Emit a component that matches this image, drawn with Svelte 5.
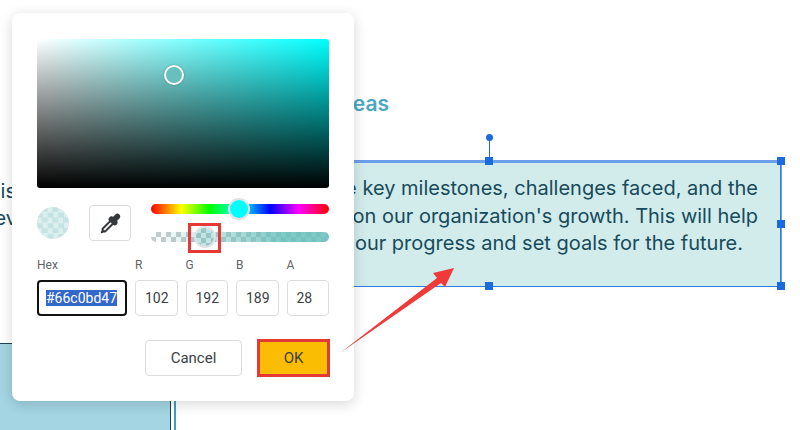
<script>
	let channels = [
		{ label: "R", value: 102 },
		{ label: "G", value: 192 },
		{ label: "B", value: 189 },
		{ label: "A", value: 28 }
	];
</script>

<div class="page">
	<!-- slide underneath the dialog -->
	<div class="side-text line-a">this</div>
	<div class="side-text line-b">rev</div>
	<div class="title">Key Ideas</div>
	<div class="side-box"></div>
	<div class="side-line"></div>

	<div class="text-box">
		<div class="line">Outline the key milestones, challenges faced, and the</div>
		<div class="line">impact on our organization's growth. This will help</div>
		<div class="line last">us track our progress and set goals for the future.</div>
		<span class="handle tm"></span>
		<span class="handle tr"></span>
		<span class="handle mr"></span>
		<span class="handle bm"></span>
		<span class="handle br"></span>
		<span class="stem"></span>
		<span class="rotate"></span>
	</div>

	<!-- colour picker -->
	<div class="dialog">
		<div class="sv">
			<span class="sv-thumb"></span>
		</div>

		<div class="controls">
			<div class="swatch"></div>
			<button class="dropper" aria-label="Pick colour">
				<svg width="21" height="21" viewBox="0 0 24 24" fill="none" stroke="#35383b" stroke-width="2.3" stroke-linecap="round" stroke-linejoin="round">
					<path d="m2 22 1-1h3l9-9" />
					<path d="M3 21v-3l9-9" />
					<path d="m15 6 3.4-3.4a2.1 2.1 0 1 1 3 3L18 9l.4.4a2.1 2.1 0 1 1-3 3l-3.8-3.8a2.1 2.1 0 1 1 3-3l.4.4Z" fill="#35383b" />
				</svg>
			</button>
			<div class="sliders">
				<div class="hue">
					<span class="hue-thumb"></span>
				</div>
				<div class="alpha">
					<span class="alpha-thumb"></span>
					<span class="alpha-mark"></span>
				</div>
			</div>
		</div>

		<div class="fields">
			<div class="label">Hex</div>
			{#each channels as c}
				<div class="label">{c.label}</div>
			{/each}
			<div class="field hex"><span class="selected">#66c0bd47</span></div>
			{#each channels as c}
				<div class="field">{c.value}</div>
			{/each}
		</div>

		<div class="actions">
			<button class="cancel">Cancel</button>
			<button class="ok">OK</button>
		</div>
	</div>

	<svg class="arrow" width="800" height="430" viewBox="0 0 800 430">
		<path d="M340 353 L437 278 L433 273 L454 268 L445 287 L441 283 Z" fill="#f03a3a" />
	</svg>
</div>

<style>
	:global(body) {
		margin: 0;
		background: #fff;
	}

	.page {
		position: relative;
		width: 800px;
		height: 430px;
		overflow: hidden;
		background: #fff;
		font-family: Roboto, "Liberation Sans", sans-serif;
	}

	.side-text {
		position: absolute;
		font-family: Inter, "Liberation Sans", sans-serif;
		font-size: 20px;
		line-height: 26px;
		color: #174a5b;
		white-space: nowrap;
	}

	.line-a {
		right: 784px;
		top: 178px;
	}

	.line-b {
		right: 783px;
		top: 205px;
	}

	.title {
		position: absolute;
		right: 411px;
		top: 90px;
		font-family: Inter, "Liberation Sans", sans-serif;
		font-size: 21px;
		line-height: 28px;
		font-weight: 600;
		color: #4aa8c0;
		white-space: nowrap;
	}

	.side-box {
		position: absolute;
		left: -2px;
		top: 343px;
		width: 172px;
		height: 100px;
		background: #a3d5e3;
		border-top: 1px solid #23414d;
		border-right: 1px solid #23414d;
	}

	.side-line {
		position: absolute;
		left: 174px;
		top: 343px;
		width: 2px;
		height: 87px;
		background: #3f9fbb;
	}

	.text-box {
		position: absolute;
		left: 197px;
		top: 161px;
		width: 584px;
		height: 126px;
		background: #d2ecec;
		box-sizing: border-box;
		padding: 12px 22px 0 0;
		border-top: 2px solid #6a9fec;
		border-right: 1px solid #2f7ae6;
		border-bottom: 1px solid #2f7ae6;
		box-shadow: 0 -1px 0 0 #6a9fec, 1px 0 0 0 #6a9fec;
		font-family: Inter, "Liberation Sans", sans-serif;
		font-size: 20px;
		line-height: 27.5px;
		color: #174a5b;
	}

	.line {
		text-align: right;
		white-space: nowrap;
	}

	.line.last {
		padding-right: 15px;
	}

	.handle {
		position: absolute;
		width: 8px;
		height: 8px;
		background: #1a6be0;
		margin: -4px 0 0 -4px;
	}

	.tm {
		left: 292px;
		top: -2px;
	}

	.tr {
		left: 584px;
		top: -2px;
	}

	.mr {
		left: 584px;
		top: 61px;
	}

	.bm {
		left: 292px;
		top: 123px;
	}

	.br {
		left: 584px;
		top: 123px;
	}

	.stem {
		position: absolute;
		left: 292px;
		top: -26px;
		width: 1px;
		height: 24px;
		background: #1a6be0;
	}

	.rotate {
		position: absolute;
		left: 289px;
		top: -29px;
		width: 7px;
		height: 7px;
		border-radius: 50%;
		background: #1a6be0;
	}

	.arrow {
		position: absolute;
		left: 0;
		top: 0;
	}

	.dialog {
		position: absolute;
		left: 12px;
		top: 13px;
		width: 342px;
		box-sizing: border-box;
		padding: 26px 25px 24px;
		background: #fff;
		border-radius: 8px;
		box-shadow: 0 3px 14px rgba(0, 0, 0, 0.16);
	}

	.sv {
		position: relative;
		height: 149px;
		border-radius: 3px;
		background:
			linear-gradient(to top, #000, transparent),
			linear-gradient(to right, #fff, #0ff);
	}

	.sv-thumb {
		position: absolute;
		left: 127px;
		top: 26px;
		width: 20px;
		height: 20px;
		box-sizing: border-box;
		border: 2px solid #fff;
		border-radius: 50%;
		background: #66c0bd;
		box-shadow: 0 0 2px rgba(0, 0, 0, 0.35);
	}

	.controls {
		display: flex;
		align-items: center;
		margin-top: 16px;
		height: 38px;
	}

	.swatch {
		width: 32px;
		height: 32px;
		border-radius: 50%;
		background: repeating-conic-gradient(#c5e3e2 0 25%, #dbefee 0 50%) 0 0 / 10.6px 10.6px;
	}

	.dropper {
		display: flex;
		align-items: center;
		justify-content: center;
		width: 42px;
		height: 36px;
		margin-left: 20px;
		padding: 0;
		background: #fff;
		border: 1px solid #dadce0;
		border-radius: 4px;
	}

	.sliders {
		display: flex;
		flex-direction: column;
		gap: 18px;
		margin-left: 20px;
		flex: 1;
	}

	.hue,
	.alpha {
		position: relative;
		height: 10px;
		border-radius: 5px;
	}

	.hue {
		background: linear-gradient(to right, #f00 0%, #ff0 17%, #0f0 33%, #0ff 50%, #00f 67%, #f0f 83%, #f00 100%);
	}

	.hue-thumb {
		position: absolute;
		left: 77px;
		top: -6px;
		width: 22px;
		height: 22px;
		box-sizing: border-box;
		border: 2px solid #dfe3e6;
		border-radius: 50%;
		background: #0ff;
	}

	.alpha {
		background:
			linear-gradient(to right, rgba(102, 192, 189, 0), rgba(102, 192, 189, 0.85) 75%),
			repeating-conic-gradient(#c9cccc 0 25%, #fff 0 50%) 0 0 / 10px 10px;
	}

	.alpha-thumb {
		position: absolute;
		left: 43px;
		top: -6px;
		width: 22px;
		height: 22px;
		box-sizing: border-box;
		border: 2px solid #dfe3e6;
		border-radius: 50%;
		background:
			linear-gradient(rgba(102, 192, 189, 0.28), rgba(102, 192, 189, 0.28)),
			repeating-conic-gradient(#a8c9c8 0 25%, #e6f2f2 0 50%) 0 0 / 10px 10px;
	}

	.alpha-mark {
		position: absolute;
		left: 37px;
		top: -9px;
		width: 33px;
		height: 30px;
		box-sizing: border-box;
		border: 3px solid #e53935;
	}

	.fields {
		display: grid;
		grid-template-columns: 90px repeat(4, 1fr);
		column-gap: 8px;
		row-gap: 9px;
		margin-top: 17px;
	}

	.label {
		font-size: 12px;
		line-height: 12px;
		color: #5f6368;
	}

	.field {
		display: flex;
		align-items: center;
		height: 36px;
		box-sizing: border-box;
		padding-left: 9px;
		border: 1px solid #dadce0;
		border-radius: 4px;
		font-size: 14px;
		color: #3c4043;
	}

	.field.hex {
		padding-left: 7px;
		border: 2px solid #111;
	}

	.selected {
		background: #3367c8;
		color: #fff;
		font-size: 14px;
		line-height: 16px;
	}

	.actions {
		display: flex;
		align-items: center;
		justify-content: flex-end;
		gap: 15px;
		margin-top: 23px;
		margin-right: -1px;
	}

	.cancel,
	.ok {
		font-family: Roboto, "Liberation Sans", sans-serif;
		font-size: 15px;
		font-weight: 400;
		color: #3c4043;
		padding: 0;
		box-sizing: border-box;
	}

	.cancel {
		width: 97px;
		height: 36px;
		background: #fff;
		border: 1px solid #dadce0;
		border-radius: 4px;
	}

	.ok {
		width: 73px;
		height: 38px;
		background: #fbbc04;
		border: 3px solid #e53935;
		border-radius: 0;
	}
</style>
